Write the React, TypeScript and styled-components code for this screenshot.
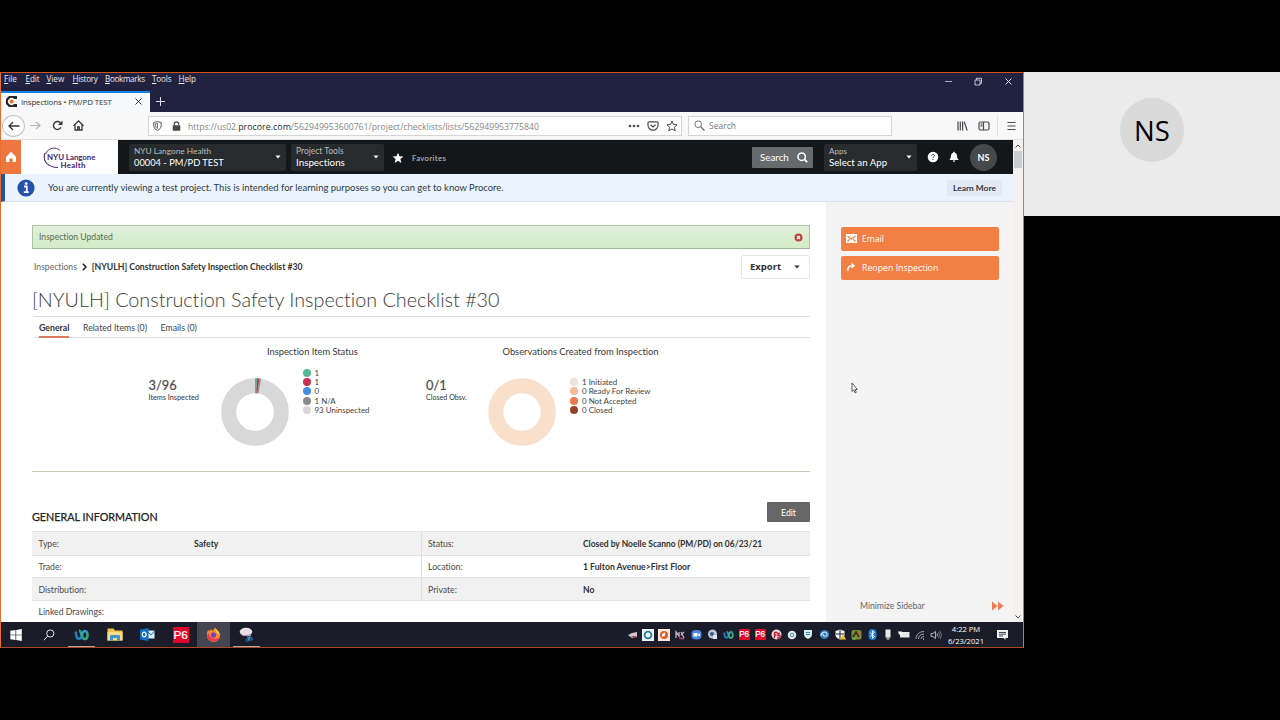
import React from "react";
import styled, { createGlobalStyle } from "styled-components";

const Global = createGlobalStyle`
  * { box-sizing: border-box; }
  body { margin: 0; background: #000; font-variant-ligatures: none; }
`;

const UI = `"Open Sans", "Liberation Sans", sans-serif`;
const WEB = `Lato, "Liberation Sans", sans-serif`;

const Text = styled.span<{ $s: number; $c?: string; $w?: number; $ls?: number; $ui?: boolean }>`
  display: block;
  white-space: nowrap;
  font-family: ${(p) => (p.$ui ? UI : WEB)};
  font-size: ${(p) => p.$s}px;
  font-weight: ${(p) => p.$w ?? 400};
  color: ${(p) => p.$c ?? "#333"};
  letter-spacing: ${(p) => p.$ls ?? 0}px;
`;

/* ---------- stage ---------- */
const Stage = styled.div`
  width: 1280px;
  height: 720px;
  padding-top: 72px;
  background: #000;
  display: flex;
  align-items: flex-start;
  overflow: hidden;
`;
const Desktop = styled.div`
  width: 1024px;
  height: 576px;
  border: 1px solid #e8702f;
  border-top-color: #d4501c;
  border-bottom-color: #a8472a;
  background: #fff;
  display: flex;
  flex-direction: column;
  overflow: hidden;
`;
const Participant = styled.div`
  width: 256px;
  height: 144px;
  background: #ebebeb;
  display: flex;
  justify-content: center;
  padding-top: 26px;
`;
const ParticipantAvatar = styled.div`
  width: 64px;
  height: 64px;
  border-radius: 50%;
  background: #dadada;
  display: flex;
  align-items: center;
  justify-content: center;
`;

/* ---------- browser chrome ---------- */
const TitleArea = styled.div`
  height: 39px;
  background: #20223f;
  display: flex;
  justify-content: space-between;
`;
const MenuBar = styled.div`
  height: 18px;
  padding: 0 0 6px 3px;
  display: flex;
  align-items: center;
`;
const MenuItem = styled(Text)<{ $width: number }>`
  width: ${(p) => p.$width}px;
  line-height: 12px;
  &::first-letter { text-decoration: underline; }
`;
const TabStrip = styled.div`
  height: 21px;
  display: flex;
  align-items: stretch;
`;
const Tab = styled.div`
  width: 149px;
  background: #f7f8fa;
  border-top: 2px solid #1583e8;
  display: flex;
  align-items: center;
  padding: 0 8px 2px 5px;
  gap: 4px;
`;
const TabLabel = styled(Text)`
  flex: 1;
`;
const NewTab = styled.div`
  width: 21px;
  padding-bottom: 1px;
  display: flex;
  align-items: center;
  justify-content: center;
`;
const WindowButtons = styled.div`
  display: flex;
  height: 16px;
  align-items: center;
  gap: 21px;
  padding-right: 10px;
`;
const Toolbar = styled.div`
  height: 28px;
  background: #f8f8f9;
  border-bottom: 1px solid #e2e2e4;
  display: flex;
  align-items: center;
`;
const NavButtons = styled.div`
  width: 147px;
  padding-left: 1px;
  display: flex;
  align-items: center;
`;
const NavSlot = styled.div<{ $width: number; $ring?: boolean }>`
  width: ${(p) => p.$width}px;
  height: ${(p) => (p.$ring ? "22px" : "auto")};
  border-radius: 50%;
  border: ${(p) => (p.$ring ? "1px solid #c4c4c8" : "0")};
  background: ${(p) => (p.$ring ? "#fff" : "transparent")};
  display: flex;
  align-items: center;
  justify-content: center;
`;
const AddressBar = styled.div`
  width: 534px;
  height: 20px;
  border: 1px solid #d5d5d8;
  background: #fff;
  display: flex;
  align-items: center;
  padding: 0 3px 0 4px;
`;
const AddressIcon = styled.div<{ $width: number }>`
  width: ${(p) => p.$width}px;
  display: flex;
  align-items: center;
`;
const Url = styled.div`
  flex: 1;
  display: flex;
  align-items: baseline;
  padding-top: 1px;
`;
const AddressActions = styled.div`
  display: flex;
  align-items: center;
  gap: 7px;
`;
const SearchBar = styled.div`
  width: 204px;
  height: 20px;
  margin-left: 6px;
  border: 1px solid #d5d5d8;
  background: #fff;
  display: flex;
  align-items: center;
  gap: 4px;
  padding-left: 5px;
`;
const ToolbarRight = styled.div`
  flex: 1;
  display: flex;
  justify-content: flex-end;
  align-items: center;
  padding-right: 7px;
`;
const SidebarIcon = styled.svg`
  margin-left: 10px;
`;
const ToolbarDivider = styled.div`
  width: 1px;
  height: 22px;
  background: #e2e2e4;
  margin: 0 9px 0 7px;
`;

/* ---------- page ---------- */
const Viewport = styled.div`
  height: 482px;
  display: flex;
  background: #f4f5f5;
`;
const Page = styled.div`
  width: 1012px;
  overflow: hidden;
`;
const Scrollbar = styled.div`
  width: 10px;
  background: #f2f1f0;
  display: flex;
  flex-direction: column;
  align-items: center;
  padding: 4px 0 3px;
`;
const ScrollThumb = styled.div`
  width: 8px;
  height: 17px;
  margin-top: 3px;
  margin-bottom: auto;
  background: #cdcdcd;
`;
const AppHeader = styled.header`
  height: 34px;
  background: #14171a;
  display: flex;
  align-items: center;
`;
const HomeButton = styled.div`
  width: 20px;
  height: 34px;
  background: #ee7640;
  display: flex;
  align-items: center;
  justify-content: center;
`;
const Logo = styled.div`
  width: 97px;
  height: 34px;
  padding-top: 1px;
  background: #fff;
  display: flex;
  align-items: center;
  justify-content: center;
`;
const Picker = styled.div<{ $width: number; $ml: number }>`
  width: ${(p) => p.$width}px;
  height: 27px;
  margin-left: ${(p) => p.$ml}px;
  padding: 0 5px 0 5px;
  background: #272b2e;
  border-radius: 2px;
  display: flex;
  align-items: center;
  justify-content: space-between;
`;
const PickerLines = styled.div`
  display: flex;
  flex-direction: column;
  > * { line-height: 11px; }
`;
const Favorites = styled.div`
  flex: 1;
  margin-left: 8px;
  padding-top: 2px;
  display: flex;
  align-items: center;
  gap: 8px;
`;
const SearchButton = styled.div`
  width: 61px;
  height: 21px;
  background: #656b6d;
  border-radius: 1px;
  display: flex;
  align-items: center;
  justify-content: space-between;
  padding: 0 5px 0 8px;
`;
const HeaderIcons = styled.div`
  width: 96px;
  display: flex;
  align-items: center;
  padding-left: 10px;
`;
const BellIcon = styled.svg`
  margin-left: 10px;
`;
const UserBadge = styled.div`
  width: 27px;
  height: 27px;
  margin-left: 11px;
  border-radius: 50%;
  background: #45494c;
  display: flex;
  align-items: center;
  justify-content: center;
`;
const Banner = styled.div`
  height: 28px;
  background: #ebf3fc;
  border-left: 4px solid #2351ab;
  border-bottom: 1px solid #d9e2ec;
  display: flex;
  align-items: center;
  padding: 0 11px 0 12px;
`;
const BannerText = styled(Text)`
  flex: 1;
  margin-left: 13px;
`;
const LearnMore = styled.div`
  height: 16px;
  width: 55px;
  background: #e1eaf4;
  border-radius: 2px;
  display: flex;
  align-items: center;
  justify-content: center;
`;
const Body = styled.div`
  height: 420px;
  display: flex;
`;
const Main = styled.main`
  width: 826px;
  background: #fff;
  padding: 23px 16px 0 31px;
  border-right: 1px solid #efefef;
`;
const Notice = styled.div`
  height: 24px;
  border: 1px solid #a9c6a0;
  border-bottom-color: #9db995;
  background: linear-gradient(#e0f0dc, #d3ebc6);
  display: flex;
  align-items: center;
  justify-content: space-between;
  padding: 0 6px;
`;
const CrumbRow = styled.div`
  height: 25px;
  margin-top: 5px;
  display: flex;
  align-items: center;
  padding-left: 2px;
`;
const Crumbs = styled.div`
  flex: 1;
  display: flex;
  align-items: center;
  gap: 5px;
`;
const ExportButton = styled.div`
  width: 69px;
  height: 24px;
  border: 1px solid #e6e6e6;
  border-radius: 2px;
  display: flex;
  align-items: center;
  justify-content: space-between;
  padding: 0 9px 0 8px;
`;
const Title = styled.h1`
  margin: 8px 0 0;
  height: 29px;
  font: 300 19.8px/25px ${WEB};
  font-variant-ligatures: none;
  color: #3c3c3c;
  white-space: nowrap;
`;
const Tabs = styled.div`
  height: 22px;
  margin-left: 2px;
  padding-left: 5px;
  border-top: 1px solid #dcdcdc;
  border-bottom: 1px solid #dcdcdc;
  display: flex;
  gap: 13.6px;
`;
const TabItem = styled(Text)<{ $active?: boolean }>`
  height: 21px;
  line-height: 22px;
  border-bottom: ${(p) => (p.$active ? "2px solid #db7961" : "0")};
`;
const Charts = styled.section`
  height: 134px;
  display: flex;
  border-bottom: 1px solid #c9cbb8;
`;
const ChartBlock = styled.div<{ $width: number; $pl: number }>`
  width: ${(p) => p.$width}px;
  padding: 7px 0 0 ${(p) => p.$pl}px;
`;
const ChartTitle = styled(Text)<{ $ml: number }>`
  margin-left: ${(p) => p.$ml}px;
  line-height: 14px;
`;
const ChartRow = styled.div`
  display: flex;
`;
const Tally = styled.div<{ $width: number }>`
  width: ${(p) => p.$width}px;
  padding-top: 18px;
`;
const TallyNumber = styled(Text)`
  line-height: 16px;
  -webkit-text-stroke: 0.2px currentColor;
`;
const TallyLabel = styled(Text)`line-height: 9px;`;
const DonutBox = styled.div`
  padding-top: 19px;
  line-height: 0;
`;
const Legend = styled.div<{ $pt: number }>`
  margin-left: 14px;
  padding-top: ${(p) => p.$pt}px;
`;
const LegendItem = styled.div`
  height: 9.4px;
  display: flex;
  align-items: center;
  gap: 4px;
`;
const Dot = styled.i<{ $color: string }>`
  width: 8px;
  height: 8px;
  border-radius: 50%;
  background: ${(p) => p.$color};
`;
const SectionHead = styled.div`
  height: 59px;
  display: flex;
  align-items: flex-end;
  justify-content: space-between;
  padding-bottom: 9px;
`;
const SectionTitle = styled(Text)`
  line-height: 11px;
  -webkit-text-stroke: 0.25px currentColor;
`;
const EditButton = styled.div`
  width: 43px;
  height: 20px;
  border-radius: 1px;
  background: #666;
  display: flex;
  align-items: center;
  justify-content: center;
`;
const InfoRow = styled.div<{ $h: number; $shade?: boolean }>`
  height: ${(p) => p.$h}px;
  background: ${(p) => (p.$shade ? "#f1f1f1" : "#fff")};
  border-top: 1px solid #e2e2e2;
  display: flex;
`;
const InfoCell = styled.div<{ $width: number; $line?: boolean }>`
  width: ${(p) => p.$width}px;
  padding-left: 6.5px;
  display: flex;
  align-items: center;
  border-left: ${(p) => (p.$line ? "1px solid #dedede" : "0")};
`;
const Sidebar = styled.aside`
  flex: 1;
  background: #f4f4f4;
  padding: 25px 9px 8px 13px;
  display: flex;
  flex-direction: column;
`;
const ActionButton = styled.div`
  height: 24px;
  margin: 0 5px 4.5px 1px;
  border-radius: 2px;
  background: #f27f43;
  display: flex;
  align-items: center;
  gap: 5px;
  padding: 0 5px;
  > svg { margin-bottom: 2px; }
`;
const Minimize = styled.div`
  margin-top: auto;
  padding: 0 0 0 20px;
  height: 16px;
  display: flex;
  align-items: center;
  justify-content: space-between;
`;

/* ---------- taskbar ---------- */
const Taskbar = styled.footer`
  height: 25px;
  background: #1b1c2a;
  display: flex;
  align-items: center;
`;
const TaskSlot = styled.div<{ $open?: boolean; $active?: boolean }>`
  width: 33px;
  height: 25px;
  display: flex;
  align-items: center;
  justify-content: center;
  background: ${(p) => (p.$active ? "#454552" : "transparent")};
  position: relative;
  &::after {
    content: "";
    display: ${(p) => (p.$open ? "block" : "none")};
    position: absolute;
    left: 3px;
    right: 3px;
    bottom: 0;
    height: 1px;
    background: #b9a39c;
  }
`;
const TaskList = styled.div`
  flex: 1;
  display: flex;
  margin-left: -2px;
`;
const Tray = styled.div`
  display: flex;
`;
const TraySlot = styled.div`
  width: 16px;
  display: flex;
  align-items: center;
  justify-content: center;
`;
const P6Tile = styled.div<{ $size: number }>`
  width: ${(p) => p.$size}px;
  height: ${(p) => p.$size}px;
  background: #e1062c;
  color: #fff;
  font: ${(p) => p.$size * 0.74}px/${(p) => p.$size}px "Liberation Sans", sans-serif;
  -webkit-text-stroke: 0.2px #fff;
  letter-spacing: -0.3px;
  text-align: center;
`;
const Clock = styled.div`
  width: 44px;
  display: flex;
  flex-direction: column;
  align-items: center;
  > * { line-height: 12px; }
`;
const Notifications = styled.div`
  width: 35px;
  display: flex;
  padding-left: 8px;
`;
const Pointer = styled.svg`
  position: absolute;
  left: 851px;
  top: 382px;
`;

const Caret = () => (
  <svg width="6" height="4" viewBox="0 0 6 4"><path d="M0.5 0.5h5L3 3.5z" fill="#fff" /></svg>
);

const Donut = ({ color, slices }: { color: string; slices?: boolean }) => (
  <svg width="68" height="68" viewBox="0 0 68 68">
    <circle cx="34" cy="34" r="26.3" fill="none" stroke={color} strokeWidth="15" />
    {slices && (
      <g fill="none" strokeWidth="15">
        <path d="M34 7.7a26.3 26.3 0 0 1 1.72.06" stroke="#55b795" />
        <path d="M35.72 7.76a26.3 26.3 0 0 1 1.71.17" stroke="#c5304f" />
        <path d="M37.43 7.93a26.3 26.3 0 0 1 1.3.2" stroke="#8d8d8d" />
      </g>
    )}
  </svg>
);

const menus: [string, number, number][] = [
  ["File", 21.5, 0], ["Edit", 21, -0.05], ["View", 26, 0], ["History", 32.5, -0.27],
  ["Bookmarks", 47, -0.33], ["Tools", 26.5, -0.15], ["Help", 20, 0],
];
const itemLegend: [string, string][] = [
  ["#55b795", "1"], ["#c5304f", "1"], ["#488ee0", "0"], ["#8a8a8a", "1 N/A"], ["#d8d8d8", "93 Uninspected"],
];
const obsLegend: [string, string][] = [
  ["#ece2da", "1 Initiated"], ["#f6bd98", "0 Ready For Review"], ["#e97a4c", "0 Not Accepted"], ["#984028", "0 Closed"],
];
const info: [number, string, string, string, string][] = [
  [24, "Type:", "Safety", "Status:", "Closed by Noelle Scanno (PM/PD) on 06/23/21"],
  [22, "Trade:", "", "Location:", "1 Fulton Avenue>First Floor"],
  [23, "Distribution:", "", "Private:", "No"],
  [22, "Linked Drawings:", "", "", ""],
];

const LegendList = ({ items, top }: { items: [string, string][]; top: number }) => (
  <Legend $pt={top}>
    {items.map(([c, t], i) => (
      <LegendItem key={i}><Dot $color={c} /><Text $s={7.95} $c="#444">{t}</Text></LegendItem>
    ))}
  </Legend>
);

const TrayIcons = () => {
  const icons: React.ReactNode[] = [
    <svg width="11" height="10" viewBox="0 0 11 10"><path d="M1 5l4-2 5-1v5l-5 1z" fill="#cfc7cb" /><path d="M4 6h6l-3 2z" fill="#b23646" /></svg>,
    <svg width="12" height="12" viewBox="0 0 12 12"><path d="M0 0h12v12H0z" fill="#eaf4f7" /><circle cx="6" cy="6" r="3.4" fill="none" stroke="#28789b" strokeWidth="1.8" /></svg>,
    <svg width="12" height="12" viewBox="0 0 12 12"><path d="M0 0h12v12H0z" fill="#fbe8dc" /><circle cx="6" cy="6" r="4" fill="#e5602b" /><path d="M4 8V5l3-1.5v3z" fill="#fff" /></svg>,
    <svg width="10" height="10" viewBox="0 0 10 10"><path d="M1 8V2l3 4V2M6 2l3 6M9 2L6 5" stroke="#c7b3c2" strokeWidth="1.3" fill="none" /><path d="M4 8l5 1" stroke="#b0436a" strokeWidth="1.3" /></svg>,
    <svg width="11" height="11" viewBox="0 0 11 11"><rect x="0.5" y="1" width="10" height="9.5" rx="4" fill="#4a86dd" /><path d="M2.5 4h4v3.5h-4zM7 5.3l2-1v3l-2-1z" fill="#fff" /></svg>,
    <svg width="11" height="11" viewBox="0 0 11 11"><circle cx="5.5" cy="5" r="4.5" fill="#b9c6d8" /><circle cx="5" cy="5" r="2" fill="#38588a" /><path d="M6 6h4v4H6z" fill="#dfe5ec" /></svg>,
    <svg width="11" height="10" viewBox="0 0 15 12" fill="none" strokeWidth="2.6"><path d="M2 2.5c-.5 9 5 9 6 3.5" stroke="#1d7fc4" /><path d="M5 1.8C8 1.5 7 10 10.5 10S14 5 12.5 2.5" stroke="#35a67d" /><path d="M8 6c.5-4 3-4.500 4.500-3.500" stroke="#2ea0d8" /></svg>,
    <P6Tile $size={11}>P6</P6Tile>,
    <P6Tile $size={11}>P6</P6Tile>,
    <svg width="11" height="11" viewBox="0 0 11 11"><circle cx="5.5" cy="5.5" r="5" fill="#ecd5db" /><path d="M3.5 9V3.5h3M3.5 6h2M9 4.500H7v2h2V9H6" stroke="#b3213c" strokeWidth="1.3" fill="none" /></svg>,
    <svg width="10" height="10" viewBox="0 0 10 10"><circle cx="5" cy="5" r="4.3" fill="#dbe9ea" /><circle cx="5" cy="5" r="1.7" fill="none" stroke="#538f98" /></svg>,
    <svg width="10" height="11" viewBox="0 0 10 11"><path d="M1 1h8v4c0 3-2 4-4 5-2-1-4-2-4-5z" fill="#d9eef0" /><path d="M3 3.5h4M3 5.5h4" stroke="#2c8c9c" /></svg>,
    <svg width="11" height="11" viewBox="0 0 11 11"><circle cx="5.5" cy="5.5" r="4.6" fill="#317bbd" /><path d="M2 7c0-4 5-5 6-2s-4 3-4 0" stroke="#b7daf2" strokeWidth="1.2" fill="none" /></svg>,
    <svg width="11" height="11" viewBox="0 0 11 11"><path d="M0.5 2L5 0.5 9.5 2v4c0 2-2 3.5-4.500 4.500C2.500 9.500.5 8 .5 6z" fill="#f3f3f3" /><path d="M5 1v9M1 5h8" stroke="#20232e" /><path d="M8 5l3 5.500H5z" fill="#f0c330" /></svg>,
    <svg width="11" height="11" viewBox="0 0 11 11"><rect x="0.5" y="1" width="10" height="9.5" rx="2" fill="#778b38" /><path d="M2 8l3-5 3 5" stroke="#273415" strokeWidth="1.5" fill="none" /><circle cx="8" cy="4" r="1.5" fill="#d0584b" /><path d="M1 10h4" stroke="#72c14e" /></svg>,
    <svg width="9" height="11" viewBox="0 0 9 11"><rect x="0.5" width="8" height="11" rx="4" fill="#1c7ed8" /><path d="M2.300 3.500l4.200 4-2 1.700V1.800l2 1.700-4.200 4" stroke="#fff" fill="none" strokeWidth=".9" /></svg>,
    <svg width="8" height="11" viewBox="0 0 8 11"><rect x="1.5" y="0.5" width="5" height="8" fill="#e8e8ea" /><path d="M2.500 8.500h3v2h-3z" fill="#bbb" /></svg>,
    <svg width="12" height="9" viewBox="0 0 12 9"><rect x="2" y="2" width="9.5" height="5.5" fill="#e8e8e8" /><path d="M0 1.500h4v3H1z" fill="#fff" /></svg>,
    <svg width="10" height="10" viewBox="0 0 10 10" fill="none" stroke="#a5a6b0"><path d="M1 9C1 5 4 1.500 9 1.500M3.500 9C3.500 6 5.500 4 9 4M6 9c0-1.500 1-2.500 3-2.500" /><path d="M8 9h1" stroke="#fff" /></svg>,
    <svg width="12" height="10" viewBox="0 0 12 10" fill="none" stroke="#c0c0c8" strokeWidth=".9"><path d="M1 3.500h2l2.500-2v7L3 6.500H1zM7 3.500q1 1.500 0 3" /><path d="M8.500 2q2.200 3 0 6M10 1q3 4 0 8" stroke="#777985" /></svg>,
  ];
  return <Tray>{icons.map((n, i) => <TraySlot key={i}>{n}</TraySlot>)}</Tray>;
};

export default function App() {
  return (
    <>
      <Global />
      <Stage>
        <Desktop>
          <TitleArea>
            <div>
              <MenuBar>
                {menus.map(([m, w, ls]) => (
                  <MenuItem key={m} $ui $s={8.1} $c="#e9e9ef" $width={w} $ls={ls}>{m}</MenuItem>
                ))}
              </MenuBar>
              <TabStrip>
                <Tab>
                  <svg width="11" height="11" viewBox="0 0 11 11">
                    <path d="M3 0h8v3H8.200A3.600 3.600 0 1 0 8.200 8H11v3H3L0 8V3z" fill="#252525" />
                    <circle cx="5.600" cy="5.500" r="2" fill="#ee6c2d" />
                  </svg>
                  <TabLabel $ui $s={7.95} $ls={-0.15} $c="#333">Inspections • PM/PD TEST</TabLabel>
                  <svg width="7" height="7" viewBox="0 0 7 7"><path d="M.5.5l6 6M6.500.5l-6 6" stroke="#333" /></svg>
                </Tab>
                <NewTab>
                  <svg width="9" height="9" viewBox="0 0 9 9"><path d="M4.500 0v9M0 4.500h9" stroke="#dcdce6" /></svg>
                </NewTab>
              </TabStrip>
            </div>
            <WindowButtons>
              <svg width="9" height="9" viewBox="0 0 9 9"><path d="M1 4.500h7" stroke="#a9aabb" /></svg>
              <svg width="9" height="9" viewBox="0 0 9 9" fill="none" stroke="#d6d7e0" strokeWidth=".9"><path d="M1 3h5v5H1zM2.500 3V1.300h5v5H6" /></svg>
              <svg width="9" height="9" viewBox="0 0 9 9"><path d="M1.500 1.500l6 6M7.500 1.500l-6 6" stroke="#dedfe8" /></svg>
            </WindowButtons>
          </TitleArea>

          <Toolbar>
            <NavButtons>
              <NavSlot $width={23} $ring>
                <svg width="12" height="10" viewBox="0 0 12 10" fill="none" stroke="#333" strokeWidth="1.3"><path d="M1 5h10.500M5 1L1 5l4 4" /></svg>
              </NavSlot>
              <NavSlot $width={21}>
                <svg width="11" height="9" viewBox="0 0 11 9" fill="none" stroke="#b4b4b8" strokeWidth="1.2"><path d="M0 4.500h10M6 1l4 3.500L6 8" /></svg>
              </NavSlot>
              <NavSlot $width={22}>
                <svg width="11" height="11" viewBox="0 0 11 11"><path d="M9 7.300A4 4 0 1 1 8.700 3.200" fill="none" stroke="#3a3a3e" strokeWidth="1.4" /><path d="M10.500.5v4.500H6z" fill="#3a3a3e" /></svg>
              </NavSlot>
              <NavSlot $width={20}>
                <svg width="11" height="11" viewBox="0 0 11 11" fill="none" stroke="#3a3a3e" strokeWidth="1.3"><path d="M.5 5.800l5-4.800 5 4.800M2 5v5h7V5M4.700 10V6.800h1.600V10" /></svg>
              </NavSlot>
            </NavButtons>
            <AddressBar>
              <AddressIcon $width={19}>
                <svg width="9" height="10" viewBox="0 0 9 10"><path d="M.8 1.500L4.500.6l3.700.9v3C8.200 7 6.500 8.600 4.500 9.400 2.500 8.600.8 7 .8 4.500z" fill="none" stroke="#555" /><path d="M4.500 2.300v5.400C3.300 7 2.500 6 2.500 4.500V2.800z" fill="none" stroke="#555" strokeWidth=".8" /></svg>
              </AddressIcon>
              <AddressIcon $width={16}>
                <svg width="9" height="10" viewBox="0 0 9 10"><rect x=".7" y="4.2" width="7.6" height="5.5" rx=".8" fill="#484848" /><path d="M2.300 4.500V3a2.200 2.200 0 0 1 4.400 0v1.500" fill="none" stroke="#484848" strokeWidth="1.2" /></svg>
              </AddressIcon>
              <Url>
                <Text $ui $s={8.6} $ls={-0.05} $c="#85858a">https://us02.</Text>
                <Text $ui $s={8.9} $c="#2a2a2e">procore.com</Text>
                <Text $ui $s={8.7} $c="#85858a">/562949953600761/project/checklists/lists/562949953775840</Text>
              </Url>
              <AddressActions>
                <svg width="12" height="4" viewBox="0 0 12 4" fill="#4a4a4e"><circle cx="2" cy="2" r="1.3" /><circle cx="6" cy="2" r="1.3" /><circle cx="10" cy="2" r="1.3" /></svg>
                <svg width="12" height="10" viewBox="0 0 12 10" fill="none" stroke="#4a4a4e" strokeWidth="1.2"><path d="M1 1.800q0-1 1-1h8q1 0 1 1v2.400a5 5 0 0 1-10 0z" /><path d="M3.500 3.700L6 6l2.500-2.300" /></svg>
                <svg width="12" height="12" viewBox="0 0 12 12"><path d="M6 1l1.500 3.400 3.600.4-2.700 2.400.8 3.600L6 9l-3.200 1.800.8-3.600L.9 4.800l3.600-.4z" fill="none" stroke="#4a4a4e" /></svg>
              </AddressActions>
            </AddressBar>
            <SearchBar>
              <svg width="11" height="11" viewBox="0 0 11 11"><circle cx="4.2" cy="4.2" r="3.3" fill="none" stroke="#707074" /><path d="M6.700 6.700l3.800 3.800" stroke="#707074" strokeWidth="1.3" /></svg>
              <Text $ui $s={8.5} $c="#77777b">Search</Text>
            </SearchBar>
            <ToolbarRight>
              <svg width="11" height="10" viewBox="0 0 11 10" stroke="#4a4a4e" strokeWidth="1.2"><path d="M1 .5v9M3.300.5v9M5.600.5v9M7.200.8l3 8.700" /></svg>
              <SidebarIcon width="12" height="10" viewBox="0 0 12 10" fill="none" stroke="#4a4a4e" strokeWidth="1.2"><rect x="1" y="1" width="10" height="8" rx="1.5" /><path d="M5.500 1v8M2.500 3h2M2.500 4.800h2" /></SidebarIcon>
              <ToolbarDivider />
              <svg width="9" height="10" viewBox="0 0 9 10" stroke="#4a4a4e"><path d="M.5 1.500h8M.5 5h8M.5 8.500h8" /></svg>
            </ToolbarRight>
          </Toolbar>

          <Viewport>
            <Page>
              <AppHeader>
                <HomeButton>
                  <svg width="12" height="12" viewBox="0 0 12 12"><path d="M6 .8L11 6v5H7.600V7.500H4.400V11H1V6z" fill="#fff" /></svg>
                </HomeButton>
                <Logo>
                  <svg width="54" height="24" viewBox="0 0 54 24">
                    <path d="M2.500 8C5 1.500 13 .5 17 4.500" fill="none" stroke="#4e2a84" strokeWidth="1" />
                    <path d="M2 7C-1 15 5 21.500 15 21.500" fill="none" stroke="#4e2a84" strokeWidth="1.1" />
                    <text x="4" y="13.5" fontFamily="Lato, sans-serif" fontWeight="700" fontSize="7.9" fill="#432277" textLength="48.5">NYU Langone</text>
                    <text x="17.5" y="21.5" fontFamily="Lato, sans-serif" fontWeight="700" fontSize="7.9" fill="#432277" textLength="25">Health</text>
                  </svg>
                </Logo>
                <Picker $width={157} $ml={11}>
                  <PickerLines>
                    <Text $s={8.3} $c="#b9bcbd">NYU Langone Health</Text>
                    <Text $s={9.3} $c="#fff">00004 - PM/PD TEST</Text>
                  </PickerLines>
                  <Caret />
                </Picker>
                <Picker $width={93} $ml={5}>
                  <PickerLines>
                    <Text $s={8.5} $c="#b9bcbd">Project Tools</Text>
                    <Text $s={9.8} $c="#fff">Inspections</Text>
                  </PickerLines>
                  <Caret />
                </Picker>
                <Favorites>
                  <svg width="12" height="12" viewBox="0 0 12 12"><path d="M6 .7l1.500 3.600 3.900.3-3 2.500 1 3.800L6 8.800l-3.400 2.100 1-3.800-3-2.500 3.900-.3z" fill="#fff" /></svg>
                  <Text $s={7.8} $ls={0.35} $c="#c4c6c8">Favorites</Text>
                </Favorites>
                <SearchButton>
                  <Text $s={9.8} $c="#fff">Search</Text>
                  <svg width="11" height="11" viewBox="0 0 11 11"><circle cx="4.7" cy="4.7" r="3.7" fill="none" stroke="#fff" strokeWidth="1.5" /><path d="M7.400 7.400l2.800 2.800" stroke="#fff" strokeWidth="1.7" /></svg>
                </SearchButton>
                <Picker $width={93} $ml={11}>
                  <PickerLines>
                    <Text $s={8.1} $c="#b9bcbd">Apps</Text>
                    <Text $s={9.7} $c="#fff">Select an App</Text>
                  </PickerLines>
                  <Caret />
                </Picker>
                <HeaderIcons>
                  <svg width="12" height="12" viewBox="0 0 12 12">
                    <circle cx="6" cy="6" r="5.3" fill="#fff" />
                    <path d="M4.600 4.800c0-2 3-1.800 2.800 0C7.200 5.800 6 5.700 6 7M6 8v1" fill="none" stroke="#33373a" strokeWidth="1" />
                  </svg>
                  <BellIcon width="10" height="12" viewBox="0 0 10 12"><path d="M5 .8c.7 0 .8.5.8 1C8 2.500 8 4.500 8.200 6.500L9.500 9H.5l1.300-2.500C2 4.500 2 2.500 4.200 1.800c0-.5.1-1 .8-1zM3.800 9.500h2.400c0 1.700-2.400 1.700-2.400 0z" fill="#fff" /></BellIcon>
                  <UserBadge><Text $s={9} $w={700} $c="#fff">NS</Text></UserBadge>
                </HeaderIcons>
              </AppHeader>

              <Banner>
                <svg width="18" height="18" viewBox="0 0 18 18">
                  <circle cx="9" cy="9" r="8.6" fill="#2351ab" />
                  <path d="M7 7.500h2.800V13M6.800 13.200h5" stroke="#fff" strokeWidth="1.8" fill="none" />
                  <circle cx="9.2" cy="4.6" r="1.4" fill="#fff" />
                </svg>
                <BannerText $s={9.46} $c="#2f3b47">You are currently viewing a test project. This is intended for learning purposes so you can get to know Procore.</BannerText>
                <LearnMore><Text $s={8.4} $w={700} $c="#2f3438">Learn More</Text></LearnMore>
              </Banner>

              <Body>
                <Main>
                  <Notice>
                    <Text $s={8.6} $c="#5b6b55">Inspection Updated</Text>
                    <svg width="9" height="9" viewBox="0 0 9 9"><circle cx="4.5" cy="4.5" r="4" fill="#b8433f" /><path d="M3 3l3 3M6 3L3 6" stroke="#fff" strokeWidth="1.2" /></svg>
                  </Notice>
                  <CrumbRow>
                    <Crumbs>
                      <Text $s={8.6} $c="#666">Inspections</Text>
                      <svg width="5" height="8" viewBox="0 0 5 8"><path d="M.8.8L4 4 .8 7.200" fill="none" stroke="#222" strokeWidth="1.5" /></svg>
                      <Text $s={8.66} $w={700} $c="#333">[NYULH] Construction Safety Inspection Checklist #30</Text>
                    </Crumbs>
                    <ExportButton>
                      <Text $ui $s={9.5} $w={700} $c="#333">Export</Text>
                      <svg width="6" height="4" viewBox="0 0 6 4"><path d="M.3.5h5.400L3 3.500z" fill="#333" /></svg>
                    </ExportButton>
                  </CrumbRow>
                  <Title>[NYULH] Construction Safety Inspection Checklist #30</Title>
                  <Tabs>
                    <TabItem $s={8.75} $w={700} $active>General</TabItem>
                    <TabItem $s={8.74} $c="#444">Related Items (0)</TabItem>
                    <TabItem $s={8.74} $c="#444">Emails (0)</TabItem>
                  </Tabs>
                  <Charts>
                    <ChartBlock $width={394} $pl={116.5}>
                      <ChartTitle $s={9.3} $ml={118.5} $c="#3a3a3a">Inspection Item Status</ChartTitle>
                      <ChartRow>
                        <Tally $width={72}>
                          <TallyNumber $s={12.8} $c="#4a4a4a">3/96</TallyNumber>
                          <TallyLabel $s={7.28} $c="#333">Items Inspected</TallyLabel>
                        </Tally>
                        <DonutBox><Donut color="#d8d8d8" slices /></DonutBox>
                        <LegendList items={itemLegend} top={9} />
                      </ChartRow>
                    </ChartBlock>
                    <ChartBlock $width={380} $pl={0}>
                      <ChartTitle $s={9.35} $ml={76.5} $c="#3a3a3a">Observations Created from Inspection</ChartTitle>
                      <ChartRow>
                        <Tally $width={62}>
                          <TallyNumber $s={12.8} $c="#4a4a4a">0/1</TallyNumber>
                          <TallyLabel $s={7.14} $c="#333">Closed Obsv.</TallyLabel>
                        </Tally>
                        <DonutBox><Donut color="#f8e0cd" /></DonutBox>
                        <LegendList items={obsLegend} top={18.4} />
                      </ChartRow>
                    </ChartBlock>
                  </Charts>
                  <SectionHead>
                    <SectionTitle $s={10.76} $c="#222">GENERAL INFORMATION</SectionTitle>
                    <EditButton><Text $s={8.7} $c="#fff">Edit</Text></EditButton>
                  </SectionHead>
                  {info.map(([h, a, b, c, d], i) => (
                    <InfoRow key={a} $h={h} $shade={i % 2 === 0}>
                      <InfoCell $width={155.5}><Text $s={8.7} $c="#4a4a4a">{a}</Text></InfoCell>
                      <InfoCell $width={233}><Text $s={8.7} $w={700}>{b}</Text></InfoCell>
                      <InfoCell $width={156} $line={i < 3}><Text $s={8.7} $c="#4a4a4a">{c}</Text></InfoCell>
                      <InfoCell $width={233}><Text $s={i === 0 ? 8.48 : 8.67} $w={700}>{d}</Text></InfoCell>
                    </InfoRow>
                  ))}
                </Main>
                <Sidebar>
                  <ActionButton>
                    <svg width="11" height="9" viewBox="0 0 11 9"><path d="M0 0h11v9H0z" fill="#fff" /><path d="M1.500 2l4 3 4-3M1.500 7.500L4 5M9.500 7.500L7 5" fill="none" stroke="#f27f43" strokeWidth="1.1" /></svg>
                    <Text $ui $s={8.65} $c="#fff">Email</Text>
                  </ActionButton>
                  <ActionButton>
                    <svg width="11" height="10" viewBox="0 0 11 10"><path d="M1.800 9C1.500 5.500 3 3.800 6 3.800" fill="none" stroke="#fff" strokeWidth="1.5" /><path d="M5.500.8L9.200 3.800 5.500 6.800z" fill="#fff" /></svg>
                    <Text $ui $s={8.8} $c="#fff">Reopen Inspection</Text>
                  </ActionButton>
                  <Minimize>
                    <Text $s={8.6} $c="#666">Minimize Sidebar</Text>
                    <svg width="13" height="10" viewBox="0 0 13 10"><path d="M1 .5l5.500 4.500L1 9.500zM7 .5l5.500 4.500L7 9.500z" fill="#ee7d55" /></svg>
                  </Minimize>
                </Sidebar>
              </Body>
            </Page>
            <Scrollbar>
              <svg width="6" height="4" viewBox="0 0 6 4"><path d="M.5 3.500L3 1l2.500 2.500" fill="none" stroke="#444" /></svg>
              <ScrollThumb />
              <svg width="6" height="4" viewBox="0 0 6 4"><path d="M.5.5L3 3 5.500.5" fill="none" stroke="#444" /></svg>
            </Scrollbar>
          </Viewport>

          <Taskbar>
            <TaskList>
              <TaskSlot>
                <svg width="12" height="12" viewBox="0 0 12 12"><path d="M.3 1.800L5.500 1v4.700H.3zM6.200.9L11.800 0v5.700H6.200zM.3 6.300h5.200V11L.3 10.200zM6.200 6.300h5.600V12l-5.600-.9z" fill="#fff" /></svg>
              </TaskSlot>
              <TaskSlot>
                <svg width="12" height="12" viewBox="0 0 12 12"><circle cx="7.3" cy="4.5" r="3.6" fill="none" stroke="#e6e6ea" /><path d="M4.700 7.200L.8 11.200" stroke="#e6e6ea" /></svg>
              </TaskSlot>
              <TaskSlot $open>
                <svg width="15" height="12" viewBox="0 0 15 12" fill="none" strokeWidth="2.6"><path d="M2 2.500c-.5 9 5 9 6 3.500" stroke="#1d7fc4" /><path d="M5 1.800C8 1.500 7 10 10.500 10S14 5 12.500 2.500" stroke="#35a67d" /><path d="M8 6c.5-4 3-4.500 4.500-3.500" stroke="#2ea0d8" /></svg>
              </TaskSlot>
              <TaskSlot>
                <svg width="16" height="13" viewBox="0 0 16 13"><path d="M.5.5h6L8 2.500h7.500v10H.5z" fill="#f2c24c" /><path d="M.5 4h15v8.500H.5z" fill="#fbdc83" /><path d="M3 12.500V8q0-1 1-1h8q1 0 1 1v4.500h-3V10H6v2.500z" fill="#3f95cf" /></svg>
              </TaskSlot>
              <TaskSlot>
                <svg width="15" height="13" viewBox="0 0 15 13"><path d="M7 2.500h7.500v8H7z" fill="#d8ecfa" /><path d="M8 4l3 3 3.500-4" stroke="#1272c4" fill="none" /><path d="M0 1.500L8.500 0v13L0 11.500z" fill="#0f6fc2" /><ellipse cx="4.2" cy="6.5" rx="1.9" ry="2.3" fill="none" stroke="#fff" strokeWidth="1.3" /></svg>
              </TaskSlot>
              <TaskSlot><P6Tile $size={16}>P6</P6Tile></TaskSlot>
              <TaskSlot $active>
                <svg width="15" height="15" viewBox="0 0 15 15"><path d="M2 3l1.500 1L5 2l1.500 2L9 .5c1 2.500 5 4 5 8a6.500 6.500 0 0 1-13 0C.8 6 1.300 4.500 2 3z" fill="#f98b2b" /><path d="M1 8.500a6.500 6.500 0 0 0 12.500 2c-3 2-10 2-11-5z" fill="#ee3d52" /><path d="M9 .5c1 2.500 5 4 5 8-1-2-2-2.500-3.500-3z" fill="#ffd63f" /><circle cx="7.5" cy="8" r="2.7" fill="#7747bd" /></svg>
              </TaskSlot>
              <TaskSlot $open>
                <svg width="15" height="15" viewBox="0 0 15 15"><ellipse cx="7" cy="4.8" rx="6.3" ry="4" fill="#e9dde4" /><path d="M1 5.500c2 3 7 4 11 1l-1 2.500H4z" fill="#c39ba8" /><path d="M8 8l2.500 5M12 8l-3 5" stroke="#5a8fb0" strokeWidth="1.2" /><circle cx="8.5" cy="13" r="1.3" fill="none" stroke="#2a85b8" /><circle cx="12" cy="12" r="1.3" fill="none" stroke="#2a85b8" /></svg>
              </TaskSlot>
            </TaskList>
            <TrayIcons />
            <Clock>
              <Text $ui $s={7.6} $c="#fff">4:22 PM</Text>
              <Text $ui $s={7.6} $c="#fff">6/23/2021</Text>
            </Clock>
            <Notifications>
              <svg width="13" height="12" viewBox="0 0 13 12"><path d="M1 1h11v8H9.500v2L7.500 9H1z" fill="#f1f1f4" /><path d="M3 3.500h7M3 5.200h7M3 7h4" stroke="#34354a" strokeWidth=".9" /></svg>
            </Notifications>
          </Taskbar>
        </Desktop>

        <Participant>
          <ParticipantAvatar><Text $ui $s={27.5} $c="#000">NS</Text></ParticipantAvatar>
        </Participant>
      </Stage>
      <Pointer width="7" height="12" viewBox="0 0 7 12"><path d="M1 1v8.500l1.800-1.600 1.300 3 1.200-.6L4.100 7.500h2.200z" fill="#fff" stroke="#333" strokeWidth=".8" /></Pointer>
    </>
  );
}
